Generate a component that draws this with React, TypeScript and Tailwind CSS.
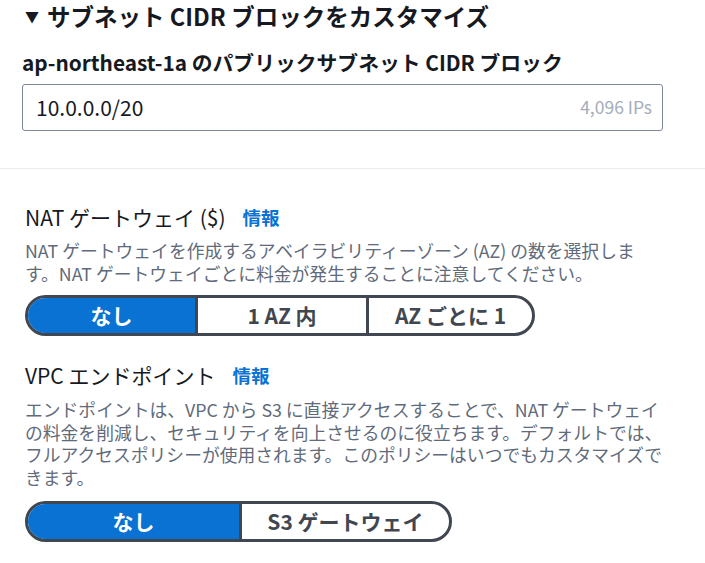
import React from "react";

const FONT = { fontFamily: '"Noto Sans CJK JP", "Noto Sans", sans-serif' };

function Segmented({ items, widths }: { items: string[]; widths: number[] }) {
  return (
    <div className="flex h-[41px] rounded-full border-[3px] border-[#414750] overflow-hidden bg-white">
      {items.map((it, i) => (
        <div
          key={it}
          style={{ width: widths[i] }}
          className={
            "flex items-center justify-center text-[21px] font-bold leading-none " +
            (i === 0 ? "bg-[#0972d3] text-white " : "text-[#414750] ") +
            (i > 0 ? "border-l-[3px] border-[#414750]" : "")
          }
        >
          {it}
        </div>
      ))}
    </div>
  );
}

export default function App() {
  return (
    <div style={FONT} className="w-[705px] h-[563px] bg-white overflow-hidden text-[#16191f]">
      <div className="pl-[25px] h-[32px] flex items-center gap-[8px]">
        <span className="text-[14px] leading-none">▼</span>
        <span className="text-[23.5px] font-bold leading-[32px]">サブネット CIDR ブロックをカスタマイズ</span>
      </div>
      <div className="pl-[22px] mt-[17px] text-[20.8px] font-bold leading-[26px]">
        ap-northeast-1a のパブリックサブネット CIDR ブロック
      </div>
      <div className="ml-[22px] mt-[9px] w-[641px] h-[47px] border border-[#7d8998] rounded-[3px] flex items-center justify-between pl-[13px] pr-[10px]">
        <span className="text-[21px]">10.0.0.0/20</span>
        <span className="text-[17.5px] text-[#a4adb9]">4,096 IPs</span>
      </div>
      <div className="mt-[37px] h-px bg-[#e9ebed]" />
      <div className="pl-[25px] pt-[35px]">
        <div className="flex items-center gap-[17px] h-[28px]">
          <span className="text-[21px]">NAT ゲートウェイ ($)</span>
          <span className="text-[18.5px] font-bold text-[#0972d3]">情報</span>
        </div>
        <div className="mt-[7px] text-[17.8px] leading-[22.5px] text-[#5f6b7a] whitespace-nowrap">
          NAT ゲートウェイを作成するアベイラビリティーゾーン (AZ) の数を選択しま
          <br />
          す。NAT ゲートウェイごとに料金が発生することに注意してください。
        </div>
        <div className="mt-[11px] w-[510px]">
          <Segmented items={["なし", "1 AZ 内", "AZ ごとに 1"]} widths={[167, 171, 166]} />
        </div>
        <div className="mt-[26px] flex items-center gap-[17px] h-[28px]">
          <span className="text-[21px]">VPC エンドポイント</span>
          <span className="text-[18.5px] font-bold text-[#0972d3]">情報</span>
        </div>
        <div className="mt-[8px] text-[17.8px] leading-[22.7px] text-[#5f6b7a] whitespace-nowrap">
          エンドポイントは、VPC から S3 に直接アクセスすることで、NAT ゲートウェイ
          <br />
          の料金を削減し、セキュリティを向上させるのに役立ちます。デフォルトでは、
          <br />
          フルアクセスポリシーが使用されます。このポリシーはいつでもカスタマイズで
          <br />
          きます。
        </div>
        <div className="mt-[12px] w-[427px]">
          <Segmented items={["なし", "S3 ゲートウェイ"]} widths={[211, 210]} />
        </div>
      </div>
    </div>
  );
}
